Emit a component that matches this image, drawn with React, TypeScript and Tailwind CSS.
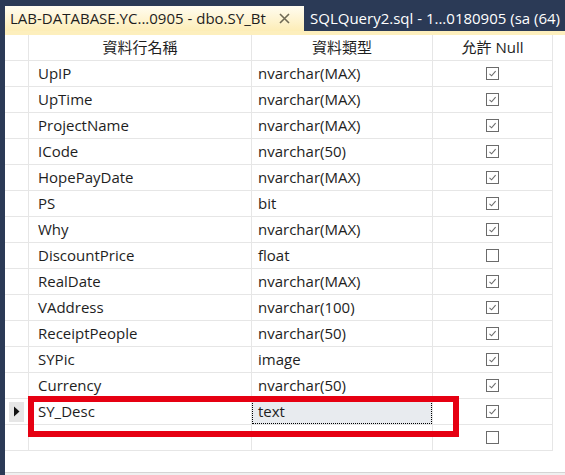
import React from 'react';

type Row = { name: string; type: string; nullable: boolean };

const rows: Row[] = [
  { name: 'UpIP', type: 'nvarchar(MAX)', nullable: true },
  { name: 'UpTime', type: 'nvarchar(MAX)', nullable: true },
  { name: 'ProjectName', type: 'nvarchar(MAX)', nullable: true },
  { name: 'ICode', type: 'nvarchar(50)', nullable: true },
  { name: 'HopePayDate', type: 'nvarchar(MAX)', nullable: true },
  { name: 'PS', type: 'bit', nullable: true },
  { name: 'Why', type: 'nvarchar(MAX)', nullable: true },
  { name: 'DiscountPrice', type: 'float', nullable: false },
  { name: 'RealDate', type: 'nvarchar(MAX)', nullable: true },
  { name: 'VAddress', type: 'nvarchar(100)', nullable: true },
  { name: 'ReceiptPeople', type: 'nvarchar(50)', nullable: true },
  { name: 'SYPic', type: 'image', nullable: true },
  { name: 'Currency', type: 'nvarchar(50)', nullable: true },
  { name: 'SY_Desc', type: 'text', nullable: true },
  { name: '', type: '', nullable: false },
];

const Check = ({ on }: { on: boolean }) => (
  <div className="w-[13px] h-[13px] border border-[#6b6b6b] bg-white flex items-center justify-center">
    {on && (
      <svg width="9" height="9" viewBox="0 0 9 9">
        <path d="M1.5 4.8 L3.6 6.8 L7.6 2.2" fill="none" stroke="#6b6b6b" strokeWidth="1.1" />
      </svg>
    )}
  </div>
);

export default function App() {
  const font = { fontFamily: '"Open Sans", "Noto Sans CJK TC", sans-serif' };
  return (
    <div className="w-[565px] h-[475px] bg-[#2b3a56] overflow-hidden flex flex-col" style={font}>
      {/* tab strip */}
      <div className="flex items-end h-[31px] pl-[5px] shrink-0">
        <div className="h-[25px] w-[299px] flex items-center pl-[5px] bg-gradient-to-b from-[#fffcf0] to-[#fdedb6] text-[#1e1e1e] text-[15px] leading-none whitespace-nowrap">
          <span>LAB-DATABASE.YC...0905 - dbo.SY_Bt</span>
          <svg className="ml-[13px]" width="11" height="11" viewBox="0 0 11 11">
            <path d="M1 1 L10 10 M10 1 L1 10" stroke="#6f6a55" strokeWidth="1.6" />
          </svg>
        </div>
        <div className="h-[25px] flex items-center pl-[6px] text-white text-[15px] leading-none whitespace-nowrap">
          SQLQuery2.sql - 1...0180905 (sa (64)
        </div>
      </div>
      <div className="h-[4px] bg-[#fdefbd] ml-[5px] shrink-0" />
      {/* grid */}
      <div className="flex-1 ml-[5px] bg-white relative flex flex-col">
        <div className="w-[548px]">
          <div className="flex h-[26px] border-b border-[#e6e6e6] text-[15px] text-[#1e1e1e]">
            <div className="w-[24px] border-r border-[#e6e6e6]" />
            <div className="w-[223px] border-r border-[#e6e6e6] flex items-center justify-center">資料行名稱</div>
            <div className="w-[181px] border-r border-[#e6e6e6] flex items-center justify-center">資料類型</div>
            <div className="w-[120px] border-r border-[#e6e6e6] flex items-center justify-center">允許 Null</div>
          </div>
          {rows.map((r, i) => {
            const current = r.name === 'SY_Desc';
            return (
              <div key={i} className="flex h-[26px] border-b border-[#e6e6e6] text-[15px] text-[#1e1e1e]">
                <div className="w-[24px] border-r border-[#e6e6e6] flex items-center justify-center">
                  {current && (
                    <div className="w-[15px] h-[20px] bg-[#e6e6e6] flex items-center justify-center">
                      <svg width="7" height="11" viewBox="0 0 7 11">
                        <path d="M1 0.5 L6.5 5.5 L1 10.5 Z" fill="#111" />
                      </svg>
                    </div>
                  )}
                </div>
                <div className="w-[223px] border-r border-[#e6e6e6] flex items-center pl-[9px]">{r.name}</div>
                <div className="w-[181px] border-r border-[#e6e6e6] flex items-center">
                  {current ? (
                    <div className="w-full h-full flex items-center pl-[5px] bg-[#e8ebef] border border-dotted border-black">
                      {r.type}
                    </div>
                  ) : (
                    <span className="pl-[6px]">{r.type}</span>
                  )}
                </div>
                <div className="w-[120px] border-r border-[#e6e6e6] flex items-center justify-center">
                  <Check on={r.nullable} />
                </div>
              </div>
            );
          })}
        </div>
        <div className="flex-1" />
        <div className="h-[3px] border-t border-[#d4d4d4] bg-[#f0f0f0]" />
        {/* highlight annotation */}
        <div className="absolute left-[23px] top-[361px] w-[431px] h-[41px] border-[6px] border-[#e60012]" />
      </div>
    </div>
  );
}
